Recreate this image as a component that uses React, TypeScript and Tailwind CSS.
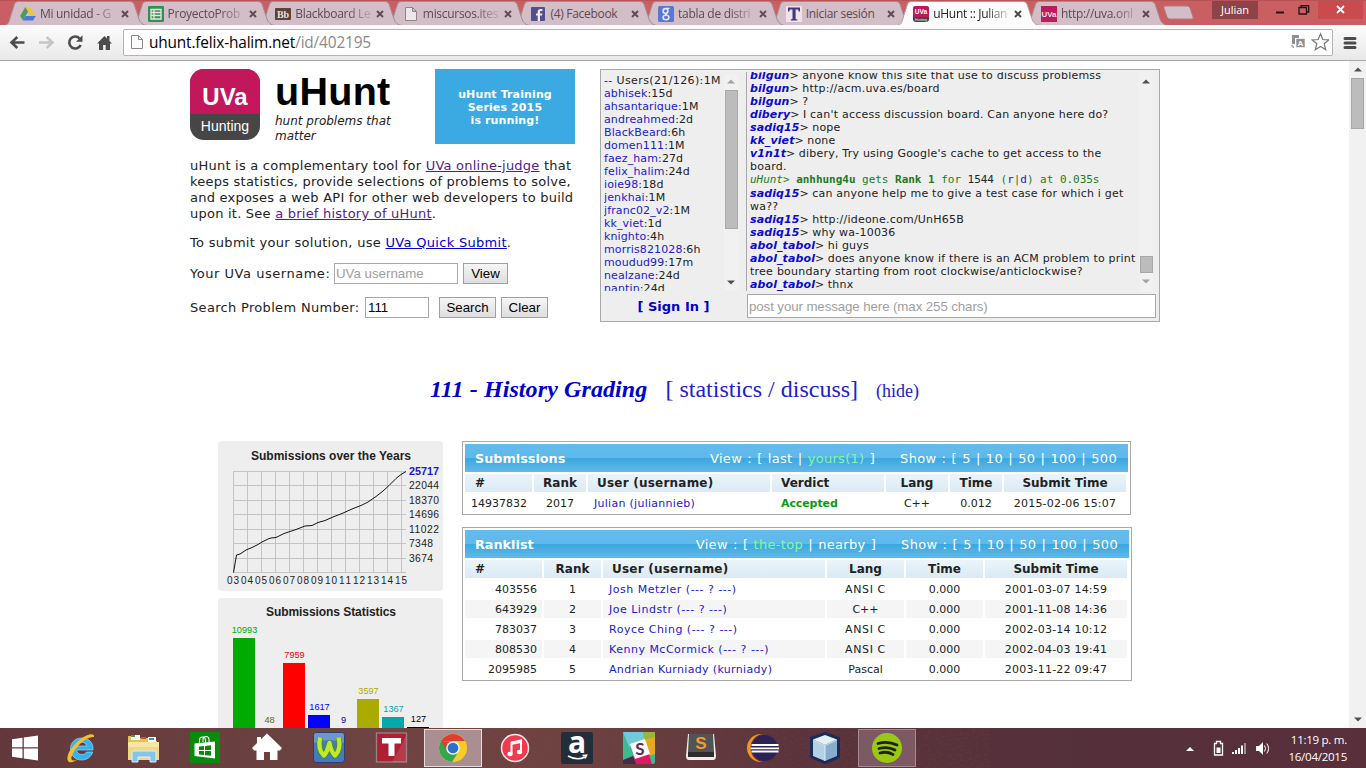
import React from "react";

const sans = "font-['DejaVu_Sans',sans-serif]";
const arial = "font-['Liberation_Sans',sans-serif]";
const segoe = "font-['Open_Sans','Noto_Sans',sans-serif]";

/* ---------- browser chrome ---------- */

const DriveIcon = () => (
  <svg width="16" height="16" viewBox="0 0 16 16">
    <path d="M5.3 1h5.2l5.2 9h-5.2z" fill="#f0c43c" />
    <path d="M5.3 1 0.2 10l2.7 4.6L8 5.7z" fill="#4a9a66" />
    <path d="M5.6 10h10.2l-2.7 4.6H2.9z" fill="#4b79dc" />
  </svg>
);
const SheetIcon = () => (
  <svg width="16" height="16" viewBox="0 0 16 16">
    <rect width="16" height="16" rx="1" fill="#2f9155" />
    <path d="M3 3.5h10v9.500H3z M3 6.500h10M3 9.500h10M6 3.500v9.500" fill="none" stroke="#f2e4e6" strokeWidth="1.300" />
  </svg>
);
const BbIcon = () => (
  <svg width="16" height="16" viewBox="0 0 16 16">
    <rect y="2" width="16" height="12" rx="1" fill="#5b423b" />
    <text x="8" y="12" textAnchor="middle" fontSize="10" fontWeight="bold" fontFamily="Liberation Serif" fill="#eadfdf">Bb</text>
  </svg>
);
const PageIcon = () => (
  <svg width="16" height="16" viewBox="0 0 16 16">
    <path d="M2.500 1.500h7l4 4v9h-11z M9.500 1.500v4h4" fill="#fafafa" fillOpacity=".7" stroke="#8c8688" />
  </svg>
);
const FbIcon = () => (
  <svg width="14" height="14" viewBox="0 0 14 14">
    <rect width="14" height="14" rx="1" fill="#514f8e" />
    <path d="M9 14V8.600h2l.4-2.200H9V5.200c0-.8.3-1.200 1.200-1.200h1.200V2H9.800C7.600 2 6.700 3.100 6.700 4.900v1.500H5v2.200h1.700V14z" fill="#f4e6ea" />
  </svg>
);
const GoogleIcon = () => (
  <svg width="16" height="16" viewBox="0 0 16 16">
    <rect width="16" height="16" rx="1.500" fill="#5877d6" />
    <circle cx="7.500" cy="5" r="2.400" fill="none" stroke="#e8e4f4" strokeWidth="1.600" />
    <path d="M8 2.300h3.500M8 7.600c-1 .9.600 1.500 1.600 2.200" fill="none" stroke="#e8e4f4" strokeWidth="1.200" />
    <ellipse cx="8" cy="11.500" rx="3" ry="2.200" fill="none" stroke="#e8e4f4" strokeWidth="1.500" />
  </svg>
);
const TIcon = () => (
  <svg width="16" height="16" viewBox="0 0 16 16">
    <rect width="16" height="16" fill="#f0e1ea" />
    <path d="M2 1.500h12v4h-1.200L12 3.500H9.600v9.600l1.700.5v1H4.800v-1l1.700-.5V3.500H4L3.200 5.500H2z" fill="#41397c" />
  </svg>
);
const UvaIcon = () => (
  <svg width="16" height="16" viewBox="0 0 16 16">
    <rect width="16" height="16" rx="3" fill="#444" />
    <path d="M0 11V3a3 3 0 0 1 3-3h10a3 3 0 0 1 3 3v8z" fill="#c2185b" />
    <text x="8" y="8" textAnchor="middle" fontSize="6.500" fontWeight="bold" fontFamily="Liberation Sans" fill="#fff">UVa</text>
    <text x="8" y="14.500" textAnchor="middle" fontSize="3.500" fontFamily="Liberation Sans" fill="#eee">Hunting</text>
  </svg>
);
const UvaIcon2 = () => (
  <svg width="16" height="16" viewBox="0 0 16 16">
    <rect width="16" height="16" fill="#bd1a5c" />
    <text x="8" y="11" textAnchor="middle" fontSize="8" fontWeight="bold" fontFamily="Liberation Sans" fill="#f5dde6">UVa</text>
  </svg>
);

const tabs = [
  { title: "Mi unidad - G", icon: <DriveIcon />, z: "z-[9]" },
  { title: "ProyectoProb", icon: <SheetIcon />, z: "z-[8]" },
  { title: "Blackboard Le", icon: <BbIcon />, z: "z-[7]" },
  { title: "miscursos.ites", icon: <PageIcon />, z: "z-[6]" },
  { title: "(4) Facebook", icon: <FbIcon />, z: "z-[5]" },
  { title: "tabla de distri", icon: <GoogleIcon />, z: "z-[4]" },
  { title: "Iniciar sesión", icon: <TIcon />, z: "z-[3]" },
  { title: "uHunt :: Julian", icon: <UvaIcon />, active: true, z: "z-[20]" },
  { title: "http://uva.onl", icon: <UvaIcon2 />, z: "z-[2]" },
];
const unfaded = ["(4) Facebook", "Iniciar sesión"];

function TabStrip() {
  return (
    <div className="flex h-[25px] bg-[#ca5f63] border-t border-[#b85458]">
      <div className="flex pl-[4px]">
        {tabs.map((t) => (
          <div key={t.title} className={`relative w-[143px] h-[24px] mr-[-15.4px] shrink-0 ${t.z}`}>
            <svg className="absolute inset-0" width="143" height="24" viewBox="0 0 143 24">
              <path
                d="M0 24.500C5 24 5 20 7 14L10.500 3Q11.500 0.500 14 0.500H126Q129 0.500 130 3L135 18Q137 24 143 24.500"
                fill={t.active ? "#fbfbfb" : "#d3bdc6"}
                stroke={t.active ? "#b79a9c" : "#a98a92"}
                strokeWidth="1"
              />
            </svg>
            <div className="relative flex items-center h-full pl-[16px] pt-px">
              <span className="w-[16px] h-[16px] shrink-0 flex items-center justify-center">{t.icon}</span>
              <span
                className={`ml-[4px] w-[81px] shrink-0 whitespace-nowrap text-[12px] leading-[18px] tracking-[-.3px] ${
                  unfaded.includes(t.title) ? "" : "[mask-image:linear-gradient(to_right,black_65%,rgba(0,0,0,.25)_90%)]"
                } ${t.active ? "text-[#222]" : "text-[#5d4b52]"}`}
              >
                {t.title}
              </span>
              <svg className="shrink-0" width="8" height="8" viewBox="0 0 8 8">
                <path d="M1 1l6 6M7 1l-6 6" stroke={t.active ? "#444" : "#5d4b52"} strokeWidth="1.900" />
              </svg>
            </div>
          </div>
        ))}
      </div>
      <svg className="ml-[10px] mt-[4px]" width="34" height="16" viewBox="0 0 34 16">
        <path d="M3 1h22q2 0 3 2l3 9q1 2-1.500 2H8q-2 0-3-2L2 3q-.6-2 1-2z" fill="#d3bdc6" stroke="#b08088" />
      </svg>
      <div className="ml-auto flex">
        <div className="w-[46px] h-[18px] mr-[8px] bg-[#8d4347] text-white text-[11px] leading-[17px] text-center">Julian</div>
        <div className="w-[28px] h-[18px] flex items-center justify-center">
          <svg width="10" height="10"><path d="M1 7.500h8" stroke="#2a1214" strokeWidth="2" /></svg>
        </div>
        <div className="w-[20px] h-[17px] flex items-center justify-center">
          <svg width="12" height="10" viewBox="0 0 12 10"><path d="M1 2.500h7.500v6.500H1zM3 2.500V.7h7.700V7H8.500" fill="none" stroke="#2a1214" strokeWidth="1.300" /></svg>
        </div>
        <div className="ml-[4px] w-[45px] h-[18px] mr-[3px] pb-px bg-[#cb4a4e] flex items-center justify-center">
          <svg width="9" height="9" viewBox="0 0 9 9"><path d="M1 1l7 7M8 1L1 8" stroke="#fff" strokeWidth="1.800" /></svg>
        </div>
      </div>
    </div>
  );
}

function Toolbar() {
  return (
    <div className="flex items-center h-[36px] bg-linear-to-b from-[#fcfcfc] to-[#e9e9e9] border-b border-[#a9a5a6]">
      <svg className="mb-px" width="124" height="34" viewBox="0 25 124 34">
        <path d="M24.500 42.500H12M17.300 37l-5.800 5.500 5.800 5.500" fill="none" stroke="#4c4c4c" strokeWidth="2.600" />
        <path d="M39 42.500h12.500M46.700 37l5.800 5.500-5.800 5.500" fill="none" stroke="#c6c6c6" strokeWidth="2.600" />
        <path d="M80.700 45a6 6 0 1 1-1-6.500" fill="none" stroke="#4c4c4c" strokeWidth="2.600" />
        <path d="M82.500 35.300v6.500H76z" fill="#4c4c4c" />
        <path d="M97 43.500l7.500-7.500 2.500 2.500V36h2.500v5l2.500 2.500h-2V50h-4.300v-5h-2.600v5H99v-6.500z" fill="#4c4c4c" />
      </svg>
      <div className="flex items-center w-[1210px] h-[27px] -ml-px pl-[5px] pr-[3px] bg-white border border-[#b4b4b4] rounded-[2px] mb-px">
        <PageIcon />
        <div className="ml-[4px] pt-px text-[15.4px] leading-[22px] tracking-[-.16px] text-black whitespace-nowrap">
          uhunt.felix-halim.net<span className="text-[#8a8a8a]">/id/402195</span>
        </div>
        <svg className="ml-auto" width="40" height="20" viewBox="0 0 40 20">
          <path d="M3 3h7v3H6v6H3z" fill="#8f8f8f" />
          <rect x="7" y="6.500" width="9" height="9" fill="#8f8f8f" stroke="#fff" strokeWidth=".6" />
          <text x="11.500" y="14" textAnchor="middle" fontSize="8" fontWeight="bold" fontFamily="Liberation Sans" fill="#fff">A</text>
          <path d="M3 13v2h3" fill="none" stroke="#8f8f8f" strokeWidth="1.500" strokeDasharray="1.500 1" />
          <path d="M31.500 1.800l2.300 5.700 6 .4-4.600 3.900 1.500 6-5.200-3.300-5.200 3.300 1.500-6-4.600-3.900 6-.4z" fill="#fff" stroke="#777" strokeWidth="1.200" />
        </svg>
      </div>
      <svg className="ml-[10px]" width="14" height="14" viewBox="0 0 14 14">
        <path d="M2 2.500h10M2 7h10M2 11.500h10" stroke="#4c4c4c" strokeWidth="3" strokeLinecap="round" />
      </svg>
    </div>
  );
}

/* ---------- page header ---------- */

const btn =
  "h-[21px] border border-[#a0a0a0] bg-linear-to-b from-[#f6f6f6] to-[#dedede] text-[13.3px] leading-[20px] text-black text-center font-['Liberation_Sans',sans-serif]";

function Intro() {
  return (
    <div className="w-[410px] text-[13px] leading-[16px] whitespace-nowrap">
      <div className="flex h-[75px]">
        <div className={`w-[70px] h-[71px] rounded-[14px] overflow-hidden bg-[#464646] text-white text-center ${arial}`}>
          <div className="h-[45px] bg-[#c2185b] text-[24px] leading-[56px] font-bold">UVa</div>
          <div className="text-[14px] leading-[25px]">Hunting</div>
        </div>
        <div className="ml-[15px] w-[160px]">
          <div className={`h-[45px] text-[39.500px] leading-[45px] font-bold tracking-[.3px] text-black ${arial}`}>uHunt</div>
          <div className="italic text-[12px] leading-[15px]">hunt problems that<br />matter</div>
        </div>
        <div className="w-[140px] h-[75px] bg-[#3ba9e2] text-white font-bold text-[11px] leading-[13px] tracking-[.12px] text-center pt-[19px]">
          uHunt Training<br />Series 2015<br />is running!
        </div>
      </div>
      <p className="mt-[14px] tracking-[.23px]">
        uHunt is a complementary tool for <a className="underline text-[#551a8b]">UVa online-judge</a> that<br />
        keeps statistics, provide selections of problems to solve,<br />
        and exposes a web API for other web developers to build<br />
        upon it. See <a className="underline text-[#551a8b]">a brief history of uHunt</a>.
      </p>
      <p className="mt-[13px] tracking-[.3px]">
        To submit your solution, use <a className="underline text-[#0000cc]">UVa Quick Submit</a>.
      </p>
      <div className="mt-[12px] h-[21px] flex items-center tracking-[.53px]">
        <span className="w-[144px]">Your UVa username:</span>
        <span className={`w-[124px] h-[21px] border border-[#a9a9a9] bg-white pl-[1px] text-[13.3px] leading-[20px] tracking-normal text-[#a0a0a0] ${arial}`}>UVa username</span>
        <span className={`${btn} ml-[5px] w-[45px] tracking-normal`}>View</span>
      </div>
      <div className="mt-[13px] h-[21px] flex items-center tracking-[.32px]">
        <span className="w-[175px]">Search Problem Number:</span>
        <span className={`w-[64px] h-[21px] border border-[#a9a9a9] bg-white pl-[2px] text-[13.3px] leading-[20px] tracking-normal text-black ${arial}`}>111</span>
        <span className={`${btn} ml-[10px] w-[57px] tracking-normal`}>Search</span>
        <span className={`${btn} ml-[5px] w-[47px] tracking-normal`}>Clear</span>
      </div>
    </div>
  );
}

const users = [
  ["abhisek", "15d"], ["ahsantarique", "1M"], ["andreahmed", "2d"], ["BlackBeard", "6h"], ["domen111", "1M"],
  ["faez_ham", "27d"], ["felix_halim", "24d"], ["ioie98", "18d"], ["jenkhai", "1M"], ["jfranc02_v2", "1M"],
  ["kk_viet", "1d"], ["knighto", "4h"], ["morris821028", "6h"], ["moudud99", "17m"], ["nealzane", "24d"], ["nantin", "24d"],
];

const messages: { who: string; lines: string[] }[] = [
  { who: "bilgun", lines: ["anyone know this site that use to discuss problemss"] },
  { who: "bilgun", lines: ["http://acm.uva.es/board"] },
  { who: "bilgun", lines: ["?"] },
  { who: "dibery", lines: ["I can't access discussion board. Can anyone here do?"] },
  { who: "sadiq15", lines: ["nope"] },
  { who: "kk_viet", lines: ["none"] },
  { who: "v1n1t", lines: ["dibery, Try using Google's cache to get access to the", "board."] },
  { who: "uHunt", lines: [] },
  { who: "sadiq15", lines: ["can anyone help me to give a test case for which i get", "wa??"] },
  { who: "sadiq15", lines: ["http://ideone.com/UnH65B"] },
  { who: "sadiq15", lines: ["why wa-10036"] },
  { who: "abol_tabol", lines: ["hi guys"] },
  { who: "abol_tabol", lines: ["does anyone know if there is an ACM problem to print", "tree boundary starting from root clockwise/anticlockwise?"] },
  { who: "abol_tabol", lines: ["thnx"] },
];

const Arrow = ({ down, color }: { down?: boolean; color: string }) => (
  <svg width="8" height="5" viewBox="0 0 8 5" className="shrink-0">
    <path d={down ? "M0 .5h8L4 4.500z" : "M0 4.500h8L4 .5z"} fill={color} />
  </svg>
);

function Chat() {
  return (
    <div className="w-[560px] h-[253px] bg-[#eee] border border-[#a9a9a9] flex text-[11px] leading-[13px] whitespace-nowrap">
      <div className="w-[145px]">
        <div className="flex h-[221px] pl-[3px] pt-[4px] overflow-hidden">
          <div className="w-[120px] h-[217px] overflow-hidden tracking-[.12px]">
            <div className="tracking-[.38px]">-- Users(21/126):1M</div>
            {users.map(([n, t]) => (
              <div key={n}><span className="text-[#2020cc]">{n}</span>:{t}</div>
            ))}
          </div>
          <div className="w-[14px] h-[216px] bg-[#f1f1f1] flex flex-col items-center pt-[5px] pb-[5px]">
            <Arrow color="#a3a3a3" />
            <div className="mt-[6px] mb-auto w-[13px] h-[139px] bg-[#bcbcbc] border border-[#a8a8a8]" />
            <Arrow down color="#505050" />
          </div>
        </div>
        <div className="mt-[9px] text-center font-bold text-[13px] leading-[14px] text-[#0000cc]">[ Sign In ]</div>
      </div>
      <div className="w-[413px]">
        <div className="mt-[2px] flex h-[219px] border-l border-[#a9a9a9] pl-[3px] overflow-hidden">
          <div className="w-[389px] h-[219px] mt-[-3px]">
            {messages.map((m, i) =>
              m.who === "uHunt" ? (
                <div key={i} className="h-[14px] leading-[14px] text-[#1d7a1d] font-['DejaVu_Sans_Mono',monospace] tracking-[-.03px]">
                  <i>uHunt&gt;</i> <b>anhhung4u</b> gets <b>Rank 1</b> for <span className="text-[#222]">1544</span> (<span className="text-[#2020cc]">r</span>|<span className="text-[#2020cc]">d</span>) at 0.035s
                </div>
              ) : (
                <div key={i}>
                  <b className="italic text-[#0b0bc8] tracking-[.1px]">{m.who}</b>&gt; <span className="tracking-[.22px]">{m.lines[0]}</span>
                  {m.lines[1] && <div className="tracking-[.25px]">{m.lines[1]}</div>}
                </div>
              ),
            )}
          </div>
          <div className="w-[14px] h-[219px] bg-[#f1f1f1] flex flex-col items-center pt-[7px] pb-[7px]">
            <Arrow color="#505050" />
            <div className="mt-auto mb-[6px] w-[13px] h-[17px] bg-[#bcbcbc] border border-[#a8a8a8] shrink-0" />
            <Arrow down color="#a3a3a3" />
          </div>
        </div>
        <div className={`mt-[3px] ml-[1px] w-[409px] h-[24px] border border-[#a9a9a9] bg-white pl-[1px] text-[13.3px] leading-[23px] tracking-[-.1px] text-[#a0a0a0] ${arial}`}>
          post your message here (max 255 chars)
        </div>
      </div>
    </div>
  );
}

/* ---------- charts ---------- */

const years = ["03", "04", "05", "06", "07", "08", "09", "10", "11", "12", "13", "14", "15"];
const levels: [string, number][] = [["22044", 44], ["18370", 59], ["14696", 73], ["11022", 88], ["7348", 102], ["3674", 117]];
const bars = [
  { x: 15, y: 40, w: 22, c: "#00aa00", n: "10993" },
  { x: 40, y: 130, w: 22, c: "#666600", n: "48" },
  { x: 65, y: 65, w: 22, c: "#ff0000", n: "7959" },
  { x: 90, y: 117, w: 22, c: "#0000ff", n: "1617" },
  { x: 114, y: 130, w: 22, c: "#0000aa", n: "9" },
  { x: 139, y: 101, w: 22, c: "#aaaa00", n: "3597" },
  { x: 164, y: 119, w: 22, c: "#00aaaa", n: "1367" },
  { x: 189, y: 129, w: 22, c: "#000000", n: "127" },
];

function Charts() {
  return (
    <div className="w-[225px] flex flex-col gap-[7px]">
      <svg width="225" height="150" viewBox="0 0 225 150" fontFamily="Liberation Sans, sans-serif">
        <rect width="225" height="150" rx="4" fill="#eee" />
        <text x="113" y="19" textAnchor="middle" fontSize="12" fontWeight="bold" fill="#222" textLength="160">Submissions over the Years</text>
        <g stroke="#c4c4c4" shapeRendering="crispEdges">
          {years.map((y, i) => <path key={y} d={`M${15.5 + i * 14} 30V131.500`} />)}
          {[30.5, 44.5, 59.5, 73.5, 88.5, 102.5, 117.5, 131.5].map((y) => <path key={y} d={`M15 ${y}H188`} />)}
        </g>
        <path d="M15.500 131.500L18.500 114 22 113 28 109 34 106.500 40 103.500 44 101 50 98 53 97 58 96.500 66 92.500 72 90.500 78 88.500 87 85 94 84.500 100 81.500 107 79.500 115 76 124 72.500 134 68 143 64.500 150 61 158 55.500 165 50 171 44.500 178 37.500 183 33.500 188 30.500" fill="none" stroke="#111" strokeWidth="1" />
        <text x="191" y="34" fontSize="10.500" fontWeight="bold" fill="#1616d6" textLength="30" lengthAdjust="spacingAndGlyphs">25717</text>
        {levels.map(([n, y]) => (
          <text key={n} x="191" y={y + 4} fontSize="10.300" fill="#222" textLength={n.length === 5 ? 30 : 24}>{n}</text>
        ))}
        {years.map((y, i) => (
          <text key={y} x={15 + i * 14} y="143" textAnchor="middle" fontSize="10" fill="#222" textLength="12">{y}</text>
        ))}
      </svg>
      <svg width="225" height="200" viewBox="0 0 225 200" fontFamily="Liberation Sans, sans-serif">
        <rect width="225" height="200" rx="4" fill="#eee" />
        <text x="113" y="18" textAnchor="middle" fontSize="12" fontWeight="bold" fill="#222" textLength="130">Submissions Statistics</text>
        {bars.map((b) => (
          <g key={b.n}>
            <rect x={b.x} y={b.y} width={b.w} height={200 - b.y} fill={b.c} />
            <text x={b.x + b.w / 2 + 0.5} y={b.y - 5} textAnchor="middle" fontSize="9.200" fill={b.c}>{b.n}</text>
          </g>
        ))}
      </svg>
    </div>
  );
}

/* ---------- tables ---------- */

const th =
  "h-[18px] bg-linear-to-b from-[#eaf4fa] to-[#dbeaf5] text-[12px] leading-[18px] font-bold text-[#222]";

function TableHead({ title, first, second, highlight }: { title: string; first: string; second: string; highlight: 0 | 1 }) {
  return (
    <div className="h-[28px] flex items-center pt-[2px] pl-[10px] pr-[11px] text-[13px] tracking-[.3px] [word-spacing:.8px] text-white bg-[linear-gradient(to_bottom,#62bbec_0%,#5fb9ea_50%,#3aa7e0_51%,#62b9e9_100%)]">
      <b className="text-[12.8px] tracking-normal">{title}</b>
      <span className="ml-auto">
        View : [ <span className={highlight === 0 ? "text-[#8af5a0]" : ""}>{first}</span> |{" "}
        <span className={highlight === 1 ? "text-[#8af5a0]" : ""}>{second}</span> ]
      </span>
      <span className="ml-[25px]">Show : [ 5 | 10 | 50 | 100 | 500</span>
    </div>
  );
}

function Submissions() {
  const cols = "grid grid-cols-[67px_52px_182px_112px_62px_52px_122px] gap-x-[2px]";
  return (
    <div className="w-[669px] h-[74px] border border-[#a9a9a9] p-[2px] bg-white whitespace-nowrap">
      <TableHead title="Submissions" first="last" second="yours(1)" highlight={1} />
      <div className={`${cols} mt-[2px]`}>
        <div className={`${th} pl-[10px]`}>#</div>
        <div className={`${th} text-center`}>Rank</div>
        <div className={`${th} pl-[9px] tracking-[.22px]`}>User (username)</div>
        <div className={`${th} pl-[9px]`}>Verdict</div>
        <div className={`${th} text-center`}>Lang</div>
        <div className={`${th} text-center`}>Time</div>
        <div className={`${th} text-center`}>Submit Time</div>
      </div>
      <div className={`${cols} mt-[2px] h-[18px] text-[11px] leading-[20px]`}>
        <div className="text-right pr-[5px]">14937832</div>
        <div className="text-center">2017</div>
        <div className="pl-[6px] text-[#2020cc] tracking-[.28px]">Julian (juliannieb)</div>
        <div className="pl-[9px] font-bold text-[#0b9c0b] tracking-[-.1px]">Accepted</div>
        <div className="text-center">C++</div>
        <div className="text-center">0.012</div>
        <div className="text-center tracking-[.2px]">2015-02-06 15:07</div>
      </div>
    </div>
  );
}

const ranks = [
  ["403556", "1", "Josh Metzler (--- ? ---)", "ANSI C", "0.000", "2001-03-07 14:59"],
  ["643929", "2", "Joe Lindstr (--- ? ---)", "C++", "0.000", "2001-11-08 14:36"],
  ["783037", "3", "Royce Ching (--- ? ---)", "ANSI C", "0.000", "2002-03-14 10:12"],
  ["808530", "4", "Kenny McCormick (--- ? ---)", "ANSI C", "0.000", "2002-04-03 19:41"],
  ["2095985", "5", "Andrian Kurniady (kurniady)", "Pascal", "0.000", "2003-11-22 09:47"],
];

function Ranklist() {
  const cols = "grid grid-cols-[77px_57px_222px_77px_77px_142px] gap-x-[2px]";
  return (
    <div className="mt-[12px] w-[670px] h-[154px] border border-[#a9a9a9] p-[2px] bg-white whitespace-nowrap">
      <TableHead title="Ranklist" first="the-top" second="nearby" highlight={0} />
      <div className={`${cols} mt-[2px]`}>
        <div className={`${th} pl-[10px]`}>#</div>
        <div className={`${th} text-center`}>Rank</div>
        <div className={`${th} pl-[9px] tracking-[.22px]`}>User (username)</div>
        <div className={`${th} text-center`}>Lang</div>
        <div className={`${th} text-center`}>Time</div>
        <div className={`${th} text-center`}>Submit Time</div>
      </div>
      {ranks.map((r, i) => (
        <div
          key={r[0]}
          className={`${cols} mt-[2px] h-[18px] text-[11px] leading-[20px] ${i % 2 ? "[&>div]:bg-[#f5f5f5]" : ""} [&>div]:h-[18px]`}
        >
          <div className="text-right pr-[5px]">{r[0]}</div>
          <div className="text-center">{r[1]}</div>
          <div className={`pl-[6px] text-[#2020cc] ${r[2].includes("?") ? "tracking-[.5px]" : "tracking-[.34px]"}`}>{r[2]}</div>
          <div className={`text-center ${r[3] === "ANSI C" ? "tracking-[.6px]" : ""}`}>{r[3]}</div>
          <div className="text-center">{r[4]}</div>
          <div className="text-center tracking-[.2px]">{r[5]}</div>
        </div>
      ))}
    </div>
  );
}

/* ---------- taskbar ---------- */

const Ico = ({ children }: { children: React.ReactNode }) => (
  <svg width="34" height="34" viewBox="0 0 34 34">{children}</svg>
);

const apps: { name: string; state?: "active" | "open"; icon: React.ReactNode }[] = [
  { name: "ie", icon: <Ico>
    <path d="M29 19H12.500c.3 3 2.500 4.500 5.500 4.500 2 0 3.500-.8 4.500-2.500h6.200C27 26 23 29 17.800 29 11 29 6.500 24.500 6.500 18S11 7 17.800 7C25 7 29.500 11.500 29 19zM12.800 15h9.700c-.4-2.500-2.200-3.800-4.800-3.800s-4.400 1.300-4.900 3.800z" fill="#35b3ec" stroke="#8edcfa" strokeWidth=".7" />
    <path d="M30 6c1-5-8-3-16 4S1 27 4.500 30.500c2 2 6 0 9-2-7 2.500-7.500-.5-4-7C13 14.500 23 5 30 6z" fill="#f7bd2c" />
  </Ico> },
  { name: "explorer", icon: <Ico>
    <path d="M2 5h7l2 2h13l1 3h6v19H2z" fill="#e4c15a" /><path d="M5 4h9v5H5zM22 6h8v6h-8z" fill="#fff" />
    <path d="M5 4h4v2H5z" fill="#37a35b" /><path d="M23 7h5v2h-5z" fill="#3a91d2" /><path d="M15 6h5v2h-5z" fill="#d54b31" />
    <path d="M2 11h31v18H2z" fill="#f7e5a1" /><path d="M2 16h31v13H2z" fill="#f0d889" />
    <path d="M6 22q0-2 2-2h20q2 0 2 2v9h-6v-5H12v5H6z" fill="#86c5e6" stroke="#d7f1fa" />
  </Ico> },
  { name: "store", icon: <Ico>
    <path d="M2 1h30v31H2z" fill="#0a8a0a" />
    <path d="M11.500 12V9q0-3 3-3t3 3v3M15 11V8q0-2.500 3-2.500t3 3V11" fill="none" stroke="#fff" strokeWidth="1.100" />
    <path d="M6.500 12.500L27 10.500v17L6.500 25z" fill="#fff" />
    <path d="M11 15.500l5-.5v4h-5zM17 14.900l6-.6v4.600h-6zM11 20h5v4l-5-.4zM17 20h6v4.800l-6-.6z" fill="#0a8a0a" />
  </Ico> },
  { name: "home", icon: <Ico><path d="M17 2.500L32 17l-2 2.500h-2.500V29H20v-8h-6v8H6.500v-9.500H4L2 17l5-5V6h4v2.200z" fill="#fff" /></Ico> },
  { name: "wamp", icon: <Ico>
    <rect x="1.500" y="1.500" width="31" height="30" rx="3" fill="#4779bd" stroke="#28436f" />
    <path d="M2 12Q17 6 32 12V4q0-2-2-2H4Q2 2 2 4z" fill="#85abd9" opacity=".6" />
    <path d="M8 6.500C6.500 14 8 21 12 24.500 14.500 22 16 18 17.500 12 18.500 18 20.500 22 23 24.500 27 21 28.500 14 26.500 6.500" fill="none" stroke="#4c8a1c" strokeWidth="5.600" strokeLinejoin="round" />
    <path d="M8 6.500C6.500 14 8 21 12 24.500 14.500 22 16 18 17.500 12 18.500 18 20.500 22 23 24.500 27 21 28.500 14 26.500 6.500" fill="none" stroke="#bdea2a" strokeWidth="4.400" strokeLinejoin="round" />
  </Ico> },
  { name: "turnitin", icon: <Ico>
    <rect x="2.500" y="2" width="30" height="29" fill="#af1f32" stroke="#9b8185" strokeWidth="1.300" />
    <path d="M8 7h19v5.500h-6.500V25h-6V12.500H8z" fill="#fff" />
    <path d="M18 31L32 5v26z" fill="#fff" opacity=".12" />
  </Ico> },
  { name: "chrome", state: "active", icon: <Ico>
    <circle cx="17" cy="17" r="14" fill="#fbcd22" />
    <path d="M4.900 10A14 14 0 0 1 29.100 10H17z" fill="#de3f33" />
    <path d="M17 17L4.900 10A14 14 0 0 0 16 31l5-8z" fill="#2fa84f" />
    <path d="M17 10.500L4.900 10l6.500 10.500z" fill="#de3f33" />
    <circle cx="17" cy="17" r="6.800" fill="#f4f4f4" /><circle cx="17" cy="17" r="5.300" fill="#2a72c8" />
  </Ico> },
  { name: "itunes", icon: <Ico>
    <circle cx="17" cy="17" r="13.500" fill="#f13a4d" stroke="#fce9ea" strokeWidth="1.500" />
    <path d="M13.500 22.500V11.500L23 9.500v11" fill="none" stroke="#fff" strokeWidth="2" /><path d="M13 11l10-2v3l-10 2z" fill="#fff" />
    <ellipse cx="12" cy="23" rx="2.700" ry="2.200" fill="#fff" /><ellipse cx="21.500" cy="21" rx="2.700" ry="2.200" fill="#fff" />
  </Ico> },
  { name: "amazon", icon: <Ico>
    <rect x="1" y="1" width="32" height="32" rx="2" fill="#222f3b" />
    <text x="17" y="22" textAnchor="middle" fontSize="30" fontWeight="bold" fontFamily="Open Sans" fill="#fff">a</text>
    <path d="M8 25q9 5 17 1M22.500 24.500l4-.3-1.300 3.300" fill="none" stroke="#fff" strokeWidth="1.600" />
  </Ico> },
  { name: "slack", icon: <Ico>
    <rect x="1" y="1" width="32" height="32" rx="2" fill="#3eb991" /><path d="M1 1h20l3 9-17 6z" fill="#70cadb" />
    <path d="M21 1h12v9l-10 3z" fill="#97b83c" /><path d="M22 9l11-3v17l-7 2z" fill="#e9a820" />
    <path d="M10 26l16-6 4 13H13z" fill="#e01765" /><path d="M1 29l10-4 3 8H1z" fill="#472a49" />
    <path d="M8 13l15-5 5 15-15 5z" fill="#fff" />
    <text x="18" y="24" textAnchor="middle" fontSize="17" fontWeight="bold" fontFamily="Lato" fill="#5b2a58">S</text>
  </Ico> },
  { name: "sublime", icon: <Ico>
    <path d="M4 3h26l2 22q0 4-3 4H5q-3 0-3-4z" fill="#eee" /><path d="M5 3h24l1 18H4z" fill="#535353" /><path d="M4 21h26v5H4z" fill="#2d2d2d" />
    <text x="17" y="18" textAnchor="middle" fontSize="17" fontWeight="bold" fontFamily="Liberation Sans" fill="#f49a31">S</text>
  </Ico> },
  { name: "eclipse", icon: <Ico>
    <circle cx="15" cy="17" r="14" fill="#f4941e" /><circle cx="18.500" cy="17" r="14" fill="#5c333c" /><circle cx="18.500" cy="17" r="13" fill="#2c2255" />
    <path d="M5.500 14h27M4.500 17.300h28.500M5.500 20.500h27" stroke="#fff" strokeWidth="1.800" />
  </Ico> },
  { name: "virtualbox", icon: <Ico>
    <path d="M17 2l14 5v19l-14 6-14-6V7z" fill="#1c2c57" stroke="#1c2c57" strokeWidth="2" strokeLinejoin="round" />
    <path d="M17 4l12 4.500L17 14 5 8.500z" fill="#e2f0f5" /><path d="M5 9l12 5.500V30L5 25z" fill="#b4d0e3" /><path d="M29 9l-12 5.500V30l12-5z" fill="#86acd0" />
    <path d="M5 9l12 5.500L29 9M17 14.500V30" fill="none" stroke="#f2f9fc" strokeWidth=".8" />
  </Ico> },
  { name: "spotify", state: "open", icon: <Ico>
    <circle cx="17" cy="17" r="15" fill="#9bc815" />
    <path d="M8 12.500q10-3 19 1.500M9 17.500q8.500-2.500 16 1.500M10 22q7-2 13 1.500" fill="none" stroke="#1e2308" strokeWidth="2.800" strokeLinecap="round" />
  </Ico> },
];

function Taskbar() {
  return (
    <div className="relative flex h-[40px] bg-[linear-gradient(to_right,#62383c_0%,#6f4543_28%,#6e4341_42%,#5a333c_58%,#54303b_80%,#592f3a_100%)] text-white">
      <svg className="absolute inset-0 opacity-40" width="1366" height="40">
        <filter id="grain"><feTurbulence type="fractalNoise" baseFrequency="0.25 0.5" numOctaves="2" /><feColorMatrix type="matrix" values="0 0 0 0 .15  0 0 0 0 .05  0 0 0 0 .05  0 2.500 0 0 -1" /></filter>
        <rect width="900" height="40" filter="url(#grain)" />
      </svg>
      <div className="relative flex w-full items-center">
        <div className="w-[50px] flex justify-center">
          <svg width="28" height="26" viewBox="0 0 28 26">
            <path d="M1 4.200L11.500 2.700V12.300H1zM12.800 2.500L27 .4V12.300H12.800zM1 13.600h10.500v9.700L1 21.800zM12.800 13.600H27v12L12.800 23.500z" fill="#fff" />
          </svg>
        </div>
        {apps.map((a) => (
          <div key={a.name} className="w-[62px] flex justify-center">
            <div
              className={`w-[58px] h-[38px] flex items-center justify-center ${
                a.state === "active" ? "bg-[#a98e92] border border-[#e6dbdc]" : a.state === "open" ? "bg-[#7d5a63] border border-[#a48b92]" : ""
              }`}
            >
              {a.icon}
            </div>
          </div>
        ))}
        <div className="ml-auto flex items-center">
          <svg width="90" height="20" viewBox="0 0 90 20">
            <path d="M4 13h8L8 9z" fill="#fff" />
            <path d="M32.500 5.500h2v-2h4v2h2v11.500h-8z" fill="none" stroke="#fff" strokeWidth="1.300" /><path d="M34.500 9.500h4V15h-4z" fill="#fff" />
            <path d="M50 14h2v2h-2zM53 12h2v4h-2zM56 10h2v6h-2zM59 7.500h2v8.500h-2z" fill="#fff" /><path d="M62 5h2v11h-2z" fill="#a48b92" />
            <path d="M74 8h3l4-4v13l-4-4h-3z" fill="#fff" /><path d="M82.500 7.500q2 3 0 6M84.800 5.500q3.500 5 0 10" fill="none" stroke="#fff" />
          </svg>
          <div className="ml-[9px] w-[66px] mr-[19px] text-right text-[11.6px] leading-[17px] whitespace-nowrap tracking-[-.3px]">
            11:19 p. m.<br />16/04/2015
          </div>
        </div>
      </div>
    </div>
  );
}

export default function App() {
  return (
    <div className={`w-[1366px] h-[768px] overflow-hidden flex flex-col bg-white ${segoe}`}>
      <TabStrip />
      <Toolbar />
      <div className="flex h-[667px] shrink-0 overflow-hidden">
        <div className={`w-[1349px] h-[667px] overflow-hidden text-[#222] ${sans}`}>
          <div className="flex pl-[190px] pt-[8px] h-[261px]">
            <Intro />
            <Chat />
          </div>
          <div className="mt-[52px] h-[30px] flex items-baseline justify-center font-['Liberation_Serif',serif] text-[#0000cc] text-[24px] leading-[30px] whitespace-nowrap">
            <span className="font-bold italic tracking-[.1px]">111 - History Grading</span>
            <span className="ml-[18px] text-[#2020cc]">[ statistics / discuss]</span>
            <span className="ml-[18px] text-[18px] text-[#2020cc]">(hide)</span>
          </div>
          <div className="mt-[37px] pl-[218px] flex gap-[19px]">
            <Charts />
            <div>
              <Submissions />
              <Ranklist />
            </div>
          </div>
        </div>
        <div className="w-[17px] bg-[#f1f1f1] flex flex-col items-center pt-[6px] pb-[6px]">
          <Arrow color="#505050" />
          <div className="mt-[6px] mb-auto w-[13px] h-[51px] bg-[#bcbcbc] border border-[#a8a8a8]" />
          <Arrow down color="#505050" />
        </div>
      </div>
      <Taskbar />
    </div>
  );
}
